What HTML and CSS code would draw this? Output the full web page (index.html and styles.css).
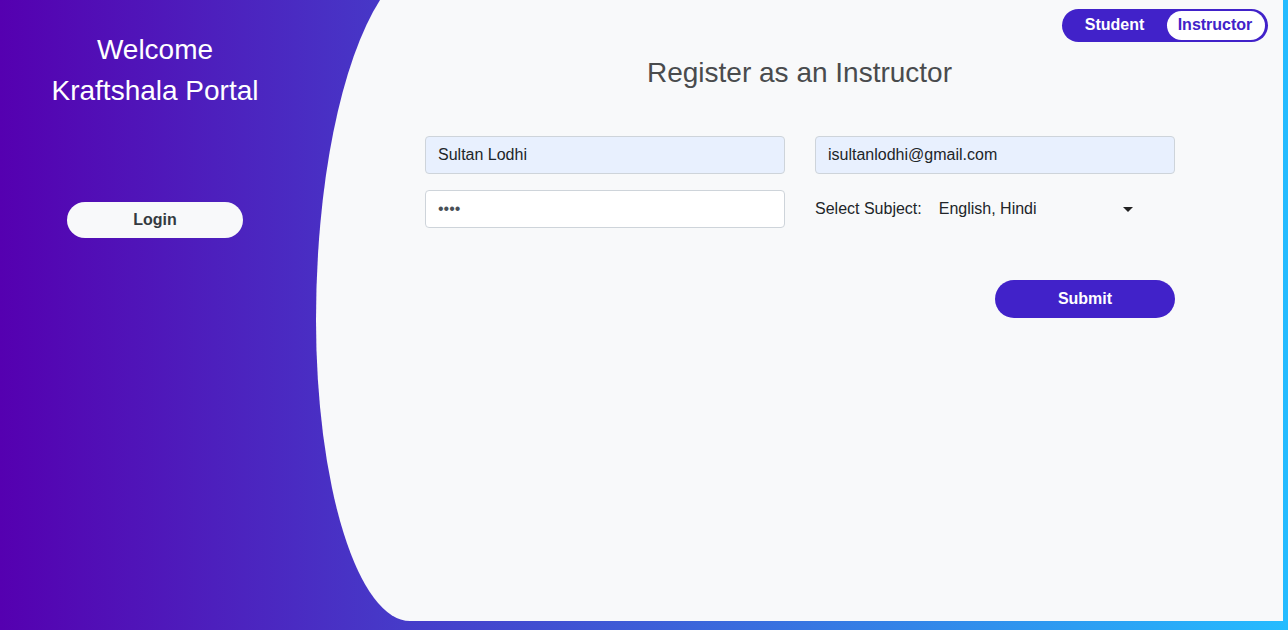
FILE: index.html
```html
<!DOCTYPE html>
<html lang="en">
<head>
<meta charset="utf-8">
<title>Kraftshala Portal</title>
<link rel="stylesheet" href="styles.css">
</head>
<body>
  <aside class="side">
    <h1 class="welcome">Welcome<br>Kraftshala Portal</h1>
    <button class="login-btn" type="button">Login</button>
  </aside>
  <main class="panel">
    <div class="toggle-row">
      <div class="toggle">
        <span class="seg seg-student">Student</span>
        <span class="seg seg-instructor active">Instructor</span>
      </div>
    </div>
    <h2 class="title">Register as an Instructor</h2>
    <form class="form">
      <div class="grid">
        <input class="field filled" type="text" value="Sultan Lodhi">
        <input class="field filled" type="email" value="isultanlodhi@gmail.com">
        <input class="field" type="password" value="1234">
        <div class="subject-row">
          <span class="subject-label">Select Subject:</span>
          <div class="ms">
            <span class="ms-value">English, Hindi</span>
            <svg class="caret" width="10" height="5" viewBox="0 0 10 5"><path d="M0 0 L10 0 L5 5 Z" fill="#222"/></svg>
          </div>
        </div>
      </div>
      <div class="actions">
        <button class="submit" type="button">Submit</button>
      </div>
    </form>
  </main>
</body>
</html>
```
FILE: styles.css
```css
html, body {
  margin: 0;
  padding: 0;
}
body {
  width: 1288px;
  height: 630px;
  overflow: hidden;
  display: flex;
  align-items: flex-start;
  background: linear-gradient(to right, #5500b0 0%, #25bcff 100%);
  font-family: "Liberation Sans", Arial, sans-serif;
}
.side {
  width: 310px;
  flex: none;
  display: flex;
  flex-direction: column;
  align-items: center;
  padding-top: 30px;
}
.welcome {
  margin: 0;
  font-weight: normal;
  font-size: 28px;
  line-height: 40.5px;
  color: #fff;
  text-align: center;
}
.login-btn {
  margin-top: 91px;
  width: 176px;
  height: 36px;
  border: none;
  border-radius: 18px;
  background: #f8f9fa;
  color: #343a40;
  font-family: "Liberation Sans", Arial, sans-serif;
  font-weight: bold;
  font-size: 16px;
  padding: 0;
}
.panel {
  margin-left: 6px;
  width: 967px;
  height: 621px;
  flex: none;
  background: #f8f9fa;
  clip-path: path('M 64 0 L 967 0 L 967 621 L 94 621 A 94 301 0 0 1 0 320 A 118 360 0 0 1 64 0 Z');
  display: flex;
  flex-direction: column;
  align-items: center;
}
.toggle-row {
  align-self: stretch;
  display: flex;
  justify-content: flex-end;
  padding: 9px 15px 0 0;
}
.toggle {
  display: flex;
  padding: 2px 3px 2px 2px;
  background: #4122c9;
  border-radius: 17px;
}
.seg {
  height: 29px;
  line-height: 28px;
  text-align: center;
  font-weight: bold;
  font-size: 16px;
  color: #fff;
  border-radius: 15px;
}
.seg-student {
  width: 101px;
  margin-right: 2px;
}
.seg-instructor {
  width: 98px;
  text-indent: -2px;
}
.seg.active {
  background: #fff;
  color: #4122c9;
}
.title {
  margin: 11px 0 0;
  font-weight: normal;
  font-size: 28px;
  line-height: 40px;
  color: #494b4d;
}
.form {
  margin-top: 43px;
  width: 750px;
  margin-left: 1px;
}
.grid {
  display: grid;
  grid-template-columns: 360px 360px;
  column-gap: 30px;
  row-gap: 16px;
}
.field {
  box-sizing: border-box;
  height: 38px;
  width: 360px;
  border: 1px solid #ced4da;
  border-radius: 4px;
  background: #fff;
  padding: 0 12px;
  font-family: "Liberation Sans", Arial, sans-serif;
  font-size: 16px;
  color: #212529;
  outline: none;
}
.field.filled {
  background: #e8f0fe;
}
.field[type="password"] {
  color: #495057;
}
.subject-row {
  display: flex;
  align-items: center;
  height: 38px;
  font-size: 16px;
  color: #212529;
}
.ms {
  display: flex;
  align-items: center;
  justify-content: space-between;
  width: 194px;
  margin-left: 17px;
}
.caret {
  display: block;
}
.actions {
  display: flex;
  justify-content: flex-end;
  margin-top: 52px;
}
.submit {
  width: 180px;
  height: 38px;
  border: none;
  border-radius: 19px;
  background: #4122c9;
  color: #fff;
  font-family: "Liberation Sans", Arial, sans-serif;
  font-weight: bold;
  font-size: 16px;
  padding: 0;
}
```
